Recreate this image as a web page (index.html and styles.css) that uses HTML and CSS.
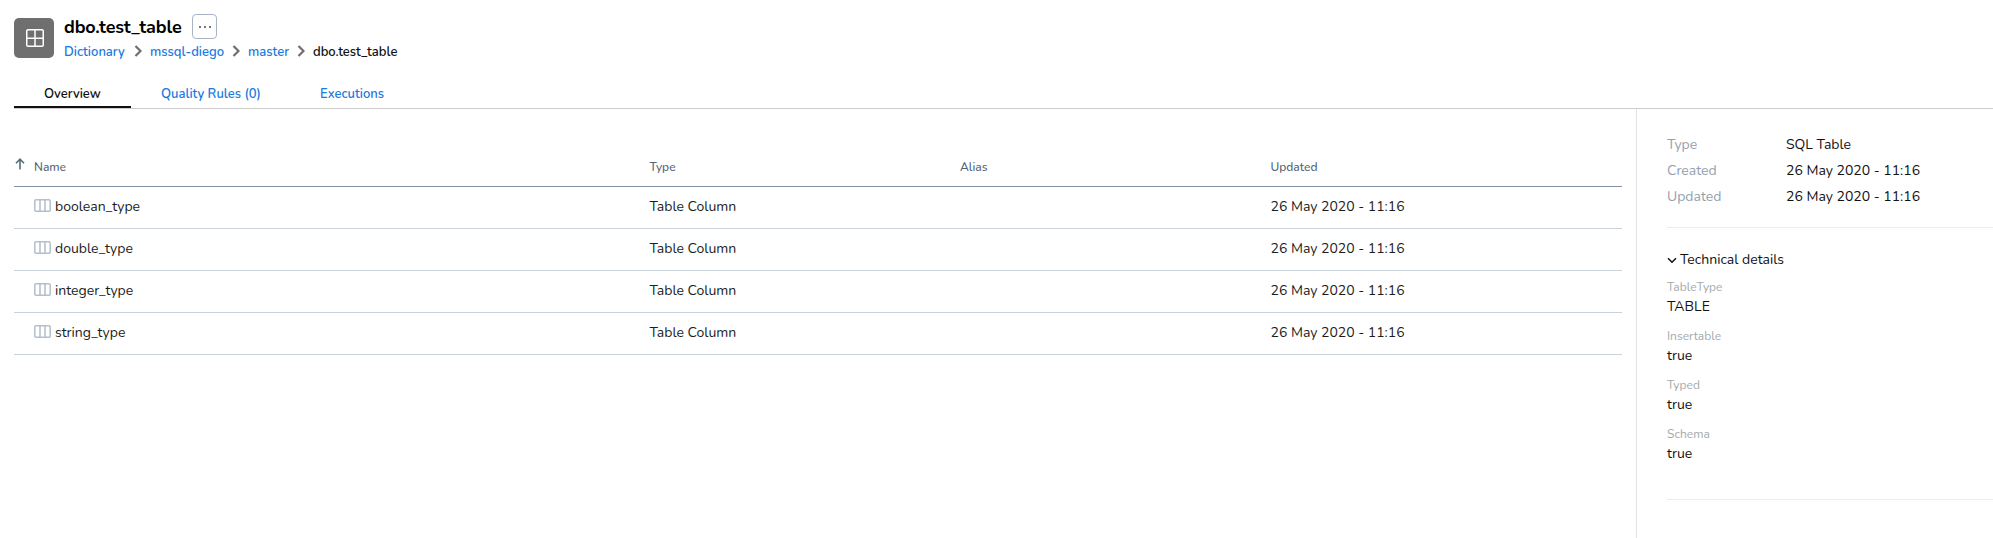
FILE: index.html
```html
<!DOCTYPE html>
<html lang="en">
<head>
<meta charset="utf-8">
<title>dbo.test_table</title>
<link rel="stylesheet" href="styles.css">
</head>
<body>
<svg class="defs" width="0" height="0">
  <symbol id="chevron" viewBox="0 0 8 12"><path d="M1.5 1 6.5 6 1.5 11" fill="none" stroke="#6f6f6f" stroke-width="2.2"/></symbol>
  <symbol id="column" viewBox="0 0 17 13"><path d="M2 .8h13a1.2 1.2 0 0 1 1.2 1.2v9a1.2 1.2 0 0 1-1.2 1.2H2A1.2 1.2 0 0 1 .8 11V2A1.2 1.2 0 0 1 2 .8zM6 1v11M11 1v11" fill="none" stroke="#b3bfca" stroke-width="1.5"/></symbol>
</svg>
<header class="header">
  <div class="entity-icon">
    <svg width="18" height="18" viewBox="0 0 18 18"><path d="M2 .75h14A1.25 1.25 0 0 1 17.25 2v14A1.25 1.25 0 0 1 16 17.25H2A1.25 1.25 0 0 1 .75 16V2A1.25 1.25 0 0 1 2 .75zM9 1v16M1 9.2h16" fill="none" stroke="#fff" stroke-width="1.5"/></svg>
  </div>
  <div class="heading">
    <div class="title-row">
      <h1 class="title">dbo.test_table</h1>
      <button class="more"><i></i><i></i><i></i></button>
    </div>
    <nav class="crumbs">
      <a class="crumb c1">Dictionary</a><svg class="sep"><use href="#chevron"/></svg>
      <a class="crumb c2">mssql-diego</a><svg class="sep"><use href="#chevron"/></svg>
      <a class="crumb c3">master</a><svg class="sep"><use href="#chevron"/></svg>
      <span class="crumb current">dbo.test_table</span>
    </nav>
  </div>
</header>
<nav class="tabs">
  <a class="tab active">Overview</a>
  <a class="tab quality">Quality Rules (0)</a>
  <a class="tab">Executions</a>
</nav>
<div class="body">
  <main class="main">
    <div class="row head">
      <span class="name"><svg class="sort" viewBox="0 0 10 12"><path d="M5 11.5V1.2M1 5.2 5 1.2 9 5.2" fill="none" stroke="#546e7a" stroke-width="1.6"/></svg>Name</span>
      <span>Type</span><span>Alias</span><span>Updated</span>
    </div>
    <div class="row"><span class="name"><svg class="col-icon"><use href="#column"/></svg>boolean_type</span><span>Table Column</span><span></span><span>26 May 2020 - 11:16</span></div>
    <div class="row"><span class="name"><svg class="col-icon"><use href="#column"/></svg>double_type</span><span>Table Column</span><span></span><span>26 May 2020 - 11:16</span></div>
    <div class="row"><span class="name"><svg class="col-icon"><use href="#column"/></svg>integer_type</span><span>Table Column</span><span></span><span>26 May 2020 - 11:16</span></div>
    <div class="row"><span class="name"><svg class="col-icon"><use href="#column"/></svg>string_type</span><span>Table Column</span><span></span><span>26 May 2020 - 11:16</span></div>
  </main>
  <aside class="side">
    <dl class="facts">
      <dt>Type</dt><dd>SQL Table</dd>
      <dt>Created</dt><dd>26 May 2020 - 11:16</dd>
      <dt>Updated</dt><dd>26 May 2020 - 11:16</dd>
    </dl>
    <section class="details">
      <h2 class="details-title"><svg width="10" height="7" viewBox="0 0 10 7"><path d="M1 1.2 5 5.2 9 1.2" fill="none" stroke="#111" stroke-width="1.5"/></svg>Technical details</h2>
      <div class="field"><div class="label">TableType</div><div class="value">TABLE</div></div>
      <div class="field"><div class="label">Insertable</div><div class="value">true</div></div>
      <div class="field"><div class="label">Typed</div><div class="value">true</div></div>
      <div class="field"><div class="label">Schema</div><div class="value">true</div></div>
    </section>
  </aside>
</div>
</body>
</html>
```
FILE: styles.css
```css
* { box-sizing: border-box; }
body {
  margin: 0;
  height: 538px;
  overflow: hidden;
  display: flex;
  flex-direction: column;
  background: #fff;
  color: #1c1c1c;
  font: 14px/20px Nunito, "Noto Sans", sans-serif;
  white-space: nowrap;
}
.defs { position: absolute; }
.header { display: flex; height: 82px; padding: 14px 0 0 14px; }
.entity-icon {
  width: 40px; height: 40px; margin: 4px 10px 0 0;
  display: flex; align-items: center; justify-content: center;
  padding-left: 1px;
  background: #6f6f6f; border-radius: 5px;
}
.title-row { display: flex; height: 25px; }
.title {
  width: 128px; margin: 0; padding-top: 1px;
  font-size: 18px; line-height: 24px; font-weight: 700; color: #000;
  letter-spacing: -.14px;
}
.more {
  width: 25px; height: 25px; padding: 0;
  display: flex; align-items: center; justify-content: center; gap: 3px;
  border: 1px solid #a9b5c6; border-radius: 4px; background: #fff;
}
.more i { width: 2px; height: 2px; background: #777; }
.crumbs { display: flex; align-items: center; height: 26px; font-size: 13px; font-weight: 600; color: #1a7ae0; }
.c1 { width: 70px; }
.c2 { width: 82px; }
.c3 { width: 49px; }
.sep { width: 8px; height: 12px; margin: 0 8px 2px 0; }
.current { color: #111; }
.tabs { display: flex; height: 27px; border-bottom: 1px solid #ccc; margin-left: 14px; font-size: 13px; font-weight: 600; color: #1a7ae0; }
.tab { width: 124px; height: 26px; padding: 2px 30px 0; }
.tab.active { width: 117px; color: #111; border-bottom: 2px solid #111; }
.tab.quality { width: 159px; }
.body { display: flex; flex: 1; }
.main { width: 1622px; padding: 38px 0 0 14px; margin-right: 14px; }
.row {
  display: grid; grid-template-columns: 635.5px 310.5px 310.5px 1fr;
  align-items: center; height: 42px; padding-bottom: 2px;
  border-bottom: 1px solid #cbd2dd;
}
.head { height: 40px; padding: 1px 0 0; border-color: #8292a2; font-size: 12px; font-weight: 500; color: #546474; }
.name { display: flex; align-items: center; padding-left: 20px; }
.head .name { padding-left: 1px; }
.sort { width: 10px; height: 12px; margin: 0 9px 6px 0; }
.col-icon { width: 17px; height: 13px; margin: 0 4px 2px 0; }
.side { flex: 1; padding: 24px 0 0 30px; border-left: 1px solid #e2e4e6; color: #111; }
.facts {
  display: grid; grid-template: repeat(3, 26px) / 119px 1fr;
  height: 95px; margin: 0; border-bottom: 1px solid #eaecf2;
}
.facts dt { color: #93a1ae; line-height: 23px; }
.facts dd { margin: 0; line-height: 23px; }
.details { height: 272px; padding-top: 21px; border-bottom: 1px solid #eaecee; }
.details-title { display: flex; align-items: center; gap: 3px; height: 22px; margin: 0 0 8px; font-size: inherit; font-weight: 400; }
.field { height: 49px; }
.label { height: 18px; line-height: 16px; font-size: 12px; color: #a6a8aa; }
.value { line-height: 20px; }
```
